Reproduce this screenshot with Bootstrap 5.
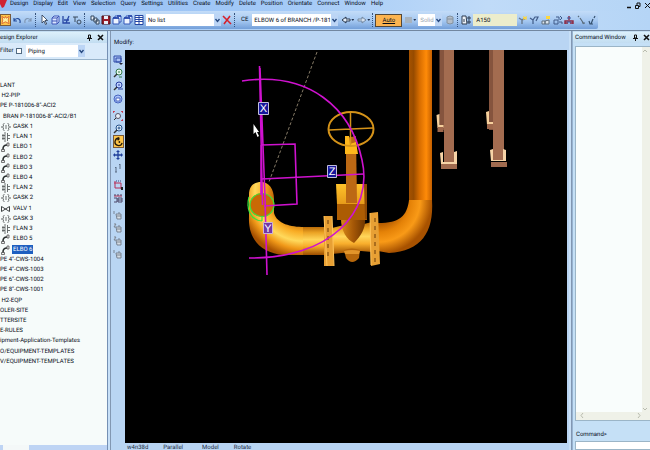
<!DOCTYPE html>
<html lang="en">
<head>
<meta charset="utf-8">
<meta name="viewport" content="width=device-width, initial-scale=1">
<title>Design</title>
<link rel="stylesheet" href="https://cdn.jsdelivr.net/npm/bootstrap@5.3.0/dist/css/bootstrap.min.css">
<style>
  body { font: 6px/10px Roboto, "Liberation Sans", sans-serif; text-rendering: geometricPrecision; color: #060c18; background: #b9d5f3; }
  button, input, select { font: inherit; color: inherit; text-rendering: inherit; }
  svg { display: block; overflow: hidden; }
  .menubar { background: linear-gradient(90deg, #94bdf3, #a4caf7 45%, #c0dbf8 75%, #b5d5f6); height: 11px; padding-left: 10px; }
  .menubar .plain { line-height: 7px; }
  .plain { border: 0; padding: 0; background: none; }
  .menu-list { gap: 5px; height: 7px; }
  .brand-mark { position: absolute; left: 0; top: 0; width: 7px; height: 8px; }
  .win-ctl { gap: 3px; }
  .win-ctl svg { width: 6px; height: 8px; }
  .toolwrap { background: linear-gradient(90deg, #a0c7f5, #c0dbf8 80%, #b5d5f6); height: 20px; border-bottom: 1px solid #72879f; }
  .toolbar-main { height: 18px; width: 92%; background: linear-gradient(#c3dcf8, #a5c8f1 55%, #739fd9); border-radius: 0 2px 2px 0; }
  .tool { width: 11px; height: 12px; flex: none; display: flex; align-items: center; justify-content: center; }
  .tool svg, .vt svg { width: 10px; height: 10px; }
  .tool.on { background: #fdc54b; border: 1px solid #795a3a; }
  .grip { width: 1px; height: 14px; flex: none; border-left: 1px dotted #35527c; margin: 0 2px; }
  .gap-l { margin-left: 2px; }
  .tri { width: 3px; height: 2px; flex: none; background: #24344f; clip-path: polygon(0 0, 100% 0, 50% 100%); }
  .pick { position: relative; flex: none; background: #fff; height: 12px; }
  .pick select { appearance: none; display: block; width: 100%; height: 12px; line-height: 11px; border: 0; padding: 0 0 0 2px; background: transparent; }
  .pick svg { position: absolute; right: 0; top: 0; width: 7px; height: 12px; background: #bcd5f5; pointer-events: none; }
  .pick-list { width: 75px; }
  .pick-ce { width: 86px; }
  .pick-fill { width: 24px; color: #9aa5b0; }
  .pick-type { width: 59px; }
  .auto { width: 27px; height: 13px; border: 1px solid #544838; background: #fcb450; line-height: 11px; text-decoration: underline; padding: 0; flex: none; }
  .spec { width: 44px; height: 12px; border: 0; background: #ecedcc; padding: 0 3px; flex: none; }
  .side { width: 108px; background: #f6fbfa; border-right: 1px solid #7590b4; flex: none; }
  .pane-title { background: linear-gradient(#dcf0fb, #c2ddf1); height: 12px; line-height: 11px; padding: 0 3px 0 0; flex: none; border-top: 1px solid #c5def2; white-space: nowrap; }
  .pane-title svg { width: 7px; height: 7px; flex: none; }
  .filter { background: #d9eafa; height: 17px; border-bottom: 1px solid #97b3cb; flex: none; }
  .filter label { width: 16px; }
  .filter input { appearance: none; width: 6px; height: 6px; border: 1px solid #526b83; background: #fff; }
  .tree { padding: 21px 0 78px; margin: 0; list-style: none; min-height: 0; }
  .tree li { height: 10px; line-height: 10px; white-space: nowrap; display: flex; align-items: center; }
  .tree svg { width: 11px; height: 10px; margin-right: 2px; flex: none; }
  .tree .sel { background: #1d5fc0; color: #fff; padding: 0 1px; margin-left: -1px; line-height: 9px; }
  .hscroll { height: 5px; background: #bed4f4; flex: none; }
  .hscroll div { width: 26px; height: 5px; margin-left: 3px; background: #f4f8f8; }
  .split { width: 3px; background: #c8e0f7; border-right: 1px solid #8297b2; flex: none; }
  .modify { height: 19px; line-height: 23px; padding-left: 3px; flex: none; }
  .vt { width: 14px; flex: none; padding-top: 3px; align-items: center; }
  .vt .tool { height: 13px; }
  .scene { background: #000; min-width: 0; min-height: 0; }
  .status { height: 7px; line-height: 10px; padding-left: 16px; gap: 15px; overflow: hidden; flex: none; color: #1c2c44; }
  .cmd { width: 78px; flex: none; background: #c5e0f6; border-left: 1px solid #97b3d0; }
  .log { margin: 3px 0 0 2px; border: 1px solid #9bb5c7; border-right: 0; background: #f9fdfc; min-height: 0; }
  .vs { width: 8px; background: #eff1e8; }
  .hs { height: 8px; background: #eff1e8; padding: 0 3px; }
  .vs svg, .hs svg { width: 6px; height: 7px; }
  .prompt { line-height: 10px; padding: 9px 0 1px 3px; flex: none; }
  .cmd input { height: 9px; border: 1px solid #9bb5c7; border-right: 0; margin-left: 2px; background: #fff; flex: none; min-width: 0; border-radius: 0; }
</style>
<script src="https://cdn.jsdelivr.net/npm/bootstrap@5.3.0/dist/js/bootstrap.bundle.min.js"></script>
</head>
<body class="vh-100 overflow-hidden d-flex flex-column">
<svg width="0" height="0" class="position-absolute" aria-hidden="true">
  <defs>
    <symbol id="chev" viewBox="0 0 7 12"><path d="M1.500 5l2 2.500 2-2.500" fill="none" stroke="#24477e" stroke-width="1.300"/></symbol>
    <symbol id="star" viewBox="0 0 10 10"><path d="M1 1l3 2 1-2 1 2 3-2-1 4 1 4-4-2-4 2 1-4z" fill="#fff1a0" stroke="#d9652e"/></symbol>
    <symbol id="undo" viewBox="0 0 10 10"><path d="M2 3v3h3M2 6c2-4 7-3 6 2" fill="none" stroke="#274f9d" stroke-width="1.200"/></symbol>
    <symbol id="redo" viewBox="0 0 10 10"><path d="M8 3v3H5M8 6C6 2 1 3 2 8" fill="none" stroke="#8098b5" stroke-width="1.200"/></symbol>
    <symbol id="arrow" viewBox="0 0 10 10"><path d="M3 0v8l2-2 1.500 3.500 1.200-.5L6 5.500h2.500z" fill="#fff" stroke="#26364e" stroke-width=".8"/></symbol>
    <symbol id="cube" viewBox="0 0 10 10"><path d="M2 3l2-2h5v6l-2 2H2zM2 3h5v6M7 3l2-2M2 6h5" fill="#dbe6ff" stroke="#3e56b8"/></symbol>
    <symbol id="axes" viewBox="0 0 10 10"><path d="M2 1v7h3M8 1L5 8h4M3 5h5" fill="none" stroke="#2947a5" stroke-width="1.300"/></symbol>
    <symbol id="tee" viewBox="0 0 10 10"><path d="M1 2h5M3 2v5" fill="none" stroke="#3b4b5d"/><circle cx="7" cy="7" r="2" fill="none" stroke="#3b4b5d"/></symbol>
    <symbol id="copy" viewBox="0 0 10 10"><path d="M1 1h3v4H1zM4 3h3v4H4zM6 5h3v4H6z" fill="#e8eff8" stroke="#33465e"/></symbol>
    <symbol id="save" viewBox="0 0 10 10"><path d="M1 1h8v8H1z" fill="#9b1c2b" stroke="#491018"/><path d="M3 1h4v3H3zM3 6h4v3H3z" fill="#e8edf8"/></symbol>
    <symbol id="win" viewBox="0 0 10 10"><path d="M1 3h6v6H1zM3 3V1h6v6H7" fill="#eef4ff" stroke="#3356b8"/><path d="M1 3h6M5 1h4" stroke="#1d3ea5" stroke-width="1.500"/></symbol>
    <symbol id="grid" viewBox="0 0 10 10"><path d="M1 .5h8v9H1z" fill="#fff" stroke="#2345a3"/><path d="M1 2.500h8M1 4.500h8M1 6.500h8M5 1v8" stroke="#2345a3"/></symbol>
    <symbol id="del" viewBox="0 0 10 10"><path d="M1 1l8 8M8 1L2 9" stroke="#d6202b" stroke-width="1.600"/></symbol>
    <symbol id="back" viewBox="0 0 10 10"><path d="M1 5l4-3v2h4v2H5v2z" fill="#e6eff9" stroke="#2a394e"/></symbol>
    <symbol id="fwd" viewBox="0 0 10 10"><path d="M9 5L5 2v2H1v2h4v2z" fill="#d6e1ee" stroke="#7388a0"/></symbol>
    <symbol id="can" viewBox="0 0 10 10"><path d="M2 2q3-2 6 0v6q-3 2-6 0zM2 4h6" fill="#b4bdc8" stroke="#84929f"/></symbol>
    <symbol id="spec" viewBox="0 0 10 10"><path d="M1 1h4l1 8H1z" fill="#eef3f8" stroke="#2f3d50"/><path d="M3 4v3M7 2h2v2H7zM7 6h2v2H7z" fill="none" stroke="#2f3d50"/></symbol>
    <symbol id="spark" viewBox="0 0 10 10"><path d="M1 3l3 2v4M4 5l4-2" fill="none" stroke="#68798e" stroke-width="1.400"/><path d="M5 1l2 1 2-1-.5 2 .5 2-2-1-2 1 .5-2z" fill="#ffd83d"/></symbol>
    <symbol id="route" viewBox="0 0 10 10"><path d="M1 3l3 2v4M4 5l2-3h3l-2 4" fill="none" stroke="#405b88" stroke-width="1.200"/></symbol>
    <symbol id="shape" viewBox="0 0 10 10"><path d="M1 6h3v3H1zM4 6l4-1v4H4z" fill="#dce5ed" stroke="#5f6e7e"/><path d="M5 1h4v3H5z" fill="#ffd83d"/></symbol>
    <symbol id="shape2" viewBox="0 0 10 10"><path d="M1 5h4v4H1zM3 2h3v3M7 1l2 2-2 2M6 7h3v2" fill="none" stroke="#405b88"/></symbol>
    <symbol id="branch" viewBox="0 0 10 10"><path d="M5 1v4M1 9V6h8v3M1 8h3M6 8h3" fill="none" stroke="#8d2740" stroke-width="1.400"/><path d="M3 3h4M3 7h4" stroke="#3a56a0"/></symbol>
    <symbol id="lineA" viewBox="0 0 10 10"><path d="M2 1l1 1M4 3l4 6M6 8h3" fill="none" stroke="#596b7a" stroke-width="1.200"/></symbol>
    <symbol id="lineB" viewBox="0 0 10 10"><path d="M8 1L7 3M6 4L4 9M2 6l1 3h3" fill="none" stroke="#35516e" stroke-width="1.200"/></symbol>
    <symbol id="pin" viewBox="0 0 7 7"><path d="M2.500 1h2v3h-2zM1 4.500h5M3.500 4v3" fill="none" stroke="#111"/></symbol>
    <symbol id="cross" viewBox="0 0 7 7"><path d="M1 1l5 5M6 1L1 6" stroke="#111" stroke-width="1.600"/></symbol>
    <symbol id="gask" viewBox="0 0 11 10"><path d="M4.500 1q-2 1-1 3l-1 1 1 1q-1 2 1 3M7.500 1q2 1 1 3l1 1-1 1q1 2-1 3M6 3v4" fill="none" stroke="#5d6262" stroke-width=".9"/><path d="M1 5h1.500M9.500 5H11" stroke="#5d6262"/></symbol>
    <symbol id="flan" viewBox="0 0 11 10"><path d="M5 0v10M7.500 1v8M2 3.500h3M2 6.500h3M7.500 3.500H10M7.500 6.500H10M3 2v6" fill="none" stroke="#5d6262" stroke-width=".9"/></symbol>
    <symbol id="elbo" viewBox="0 0 11 10"><path d="M3 9V7q0-4 4-4h1" fill="none" stroke="#2b3030" stroke-width="1.600"/><path d="M7 1h2v3H7zM1.500 7.500h3v2h-3z" fill="#eee" stroke="#444" stroke-width=".7"/></symbol>
    <symbol id="valv" viewBox="0 0 11 10"><path d="M1.500 2.500v5l8-5v5z" fill="#fff" stroke="#3c4242"/></symbol>
    <symbol id="vbox" viewBox="0 0 10 10"><path d="M1 1h7v6H1zM3 3h5v4H3z" fill="#a9c1f5" stroke="#304da8"/><path d="M6 8h4L8 10z" fill="#223"/></symbol>
    <symbol id="mag" viewBox="0 0 10 10"><circle cx="6" cy="4" r="3" fill="#e6f4ff" stroke="#24508a"/><path d="M4 6L1 9" stroke="#333" stroke-width="1.400"/><path d="M6 2.500v3M4.500 4h3" stroke="#24508a"/></symbol>
    <symbol id="magG" viewBox="0 0 10 10"><circle cx="6" cy="4" r="3" fill="#e8f8ee" stroke="#337a4c"/><path d="M4 6L1 9" stroke="#333" stroke-width="1.400"/><path d="M6 9h3M5 4h2" stroke="#337a4c"/></symbol>
    <symbol id="magR" viewBox="0 0 10 10"><circle cx="5" cy="5" r="2.500" fill="#e8f0fa" stroke="#5a5568"/><path d="M3 7L1 9" stroke="#333"/><path d="M0 2V0h2M8 0h2v2M10 8v2H8" fill="none" stroke="#cb283c" stroke-width="1.400"/></symbol>
    <symbol id="magB" viewBox="0 0 10 10"><circle cx="6" cy="4" r="3" fill="#bfd2ff" stroke="#273ea0"/><path d="M4 6L1 9" stroke="#333" stroke-width="1.400"/><path d="M5 8h5M5 4h2" stroke="#273ea0"/></symbol>
    <symbol id="box3" viewBox="0 0 10 10"><circle cx="5" cy="5" r="4" fill="#aac2f8" stroke="#4765c0"/><path d="M3 4h4v3H3z" fill="#fff" stroke="#4765c0"/></symbol>
    <symbol id="rot" viewBox="0 0 10 10"><path d="M6 1a4 4 0 1 0 3 5M6 1L4 0M6 1L4 3" fill="none" stroke="#261c0c" stroke-width="1.500"/><circle cx="6" cy="5" r="1" fill="#261c0c"/></symbol>
    <symbol id="pan" viewBox="0 0 10 10"><path d="M5 1v8M1 5h8" stroke="#203f9b" stroke-width="1.300"/><path d="M5 0l2 2H3zM5 10l2-2H3zM0 5l2-2v4zM10 5L8 3v4z" fill="#203f9b"/></symbol>
    <symbol id="walk" viewBox="0 0 10 10"><path d="M3 4v5M7 1v5M2 5l1-1M6 2l1-1M2 9h2" fill="none" stroke="#5a6d85"/></symbol>
    <symbol id="clip" viewBox="0 0 10 10"><path d="M2 1v7h8M1 3h7v6" fill="none" stroke="#b52d54"/><path d="M3 1h6" stroke="#30427d" stroke-dasharray="1 1"/><path d="M8 7h2v3H8z" fill="#222"/></symbol>
    <symbol id="clip2" viewBox="0 0 10 10"><path d="M1 3h8" stroke="#c92e4e"/><path d="M2 1v2M5 1v2M8 1v2M1 5h3v4H1M5 5h4v4H5zM5 7h4" fill="none" stroke="#4c4768"/></symbol>
    <symbol id="camera" viewBox="0 0 10 10"><path d="M3 4h5v5H4zM4 6h4M6 4V2M1 1v3" fill="#d7dee5" stroke="#788392"/></symbol>
    <symbol id="camera2" viewBox="0 0 10 10"><path d="M3 4h5v5H4zM4 6h4M6 4V2M1 1h2L1 4h2" fill="#d7dee5" stroke="#788392"/></symbol>
  </defs>
</svg>

<nav class="menubar position-relative d-flex justify-content-between flex-shrink-0" aria-label="Menu">
  <svg class="brand-mark" viewBox="0 0 7 8"><path d="M0 0h7L4 7 2 8 0 4z" fill="#d02232"/></svg>
  <div class="menu-list d-flex">
    <button class="plain">Design</button><button class="plain">Display</button><button class="plain">Edit</button><button class="plain">View</button><button class="plain">Selection</button><button class="plain">Query</button><button class="plain">Settings</button><button class="plain">Utilities</button><button class="plain">Create</button><button class="plain">Modify</button><button class="plain">Delete</button><button class="plain">Position</button><button class="plain">Orientate</button><button class="plain">Connect</button><button class="plain">Window</button><button class="plain">Help</button>
  </div>
  <div class="win-ctl d-flex">
    <button class="plain" aria-label="Minimise"><svg viewBox="0 0 6 8"><path d="M1 5.500h4" stroke="#111" stroke-width="1.500"/></svg></button>
    <button class="plain" aria-label="Restore"><svg viewBox="0 0 6 8"><path d="M.5 3.500h3v3h-3zM2 3V1h3v3.500H4" fill="none" stroke="#111"/></svg></button>
    <button class="plain" aria-label="Close"><svg viewBox="0 0 6 8"><path d="M1 1l5 5M6 1L1 6" stroke="#111"/></svg></button>
  </div>
</nav>

<div class="toolwrap flex-shrink-0">
  <div class="toolbar-main d-flex align-items-center">
    <button class="plain tool on" aria-label="Explorer"><svg><use href="#star"/></svg></button>
    <button class="plain tool" aria-label="Undo"><svg><use href="#undo"/></svg></button>
    <button class="plain tool" aria-label="Redo"><svg><use href="#redo"/></svg></button>
    <span class="grip"></span>
    <button class="plain tool" aria-label="Select"><svg><use href="#arrow"/></svg></button>
    <button class="plain tool" aria-label="Box"><svg><use href="#cube"/></svg></button>
    <button class="plain tool" aria-label="Axes"><svg><use href="#axes"/></svg></button>
    <button class="plain tool" aria-label="Tag"><svg><use href="#tee"/></svg></button>
    <span class="grip"></span>
    <button class="plain tool gap-l" aria-label="Copy"><svg><use href="#copy"/></svg></button>
    <button class="plain tool" aria-label="Save"><svg><use href="#save"/></svg></button>
    <button class="plain tool" aria-label="New view"><svg><use href="#win"/></svg></button>
    <button class="plain tool" aria-label="Clone view"><svg><use href="#win"/></svg></button>
    <button class="plain tool" aria-label="Lists"><svg><use href="#grid"/></svg></button>
    <div class="pick pick-list gap-l"><select aria-label="List"><option>No list</option></select><svg><use href="#chev"/></svg></div>
    <button class="plain tool" aria-label="Delete"><svg><use href="#del"/></svg></button>
    <span class="grip"></span>
    <label for="ce" class="px-1">CE</label>
    <div class="pick pick-ce"><select id="ce"><option>ELBOW 6 of BRANCH /P-181</option></select><svg><use href="#chev"/></svg></div>
    <button class="plain tool gap-l" aria-label="Back"><svg><use href="#back"/></svg></button><span class="tri"></span>
    <button class="plain tool gap-l" aria-label="Forward"><svg><use href="#fwd"/></svg></button><span class="tri"></span>
    <span class="grip"></span>
    <button class="auto">Auto</button>
    <button class="plain tool" aria-label="Fill"><svg viewBox="0 0 10 10"><path d="M2 2h7v6H2z" fill="#a6b3c0"/></svg></button><span class="tri"></span>
    <div class="pick pick-fill gap-l"><select aria-label="Fill style"><option>Solid</option></select><svg><use href="#chev"/></svg></div>
    <button class="plain tool gap-l" aria-label="Store"><svg><use href="#can"/></svg></button>
    <span class="grip"></span>
    <button class="plain tool" aria-label="Specification"><svg><use href="#spec"/></svg></button>
    <input class="spec gap-l" value="A150" aria-label="Specification name">
    <div class="d-flex justify-content-between flex-fill">
      <button class="plain tool" aria-label="New pipe"><svg><use href="#spark"/></svg></button>
      <button class="plain tool" aria-label="Route"><svg><use href="#route"/></svg></button>
      <button class="plain tool" aria-label="New part"><svg><use href="#shape"/></svg></button>
      <button class="plain tool" aria-label="Change part"><svg><use href="#shape2"/></svg></button>
      <button class="plain tool" aria-label="Branch"><svg><use href="#branch"/></svg></button>
      <button class="plain tool" aria-label="Slope down"><svg><use href="#lineA"/></svg></button>
      <button class="plain tool" aria-label="Slope up"><svg><use href="#lineB"/></svg></button>
    </div>
  </div>
</div>

<main class="d-flex flex-fill" style="min-height:0">
  <aside class="side d-flex flex-column overflow-hidden">
    <div class="pane-title d-flex align-items-center"><span class="me-auto">esign Explorer</span><svg class="me-1"><use href="#pin"/></svg><svg><use href="#cross"/></svg></div>
    <div class="filter d-flex align-items-center"><label for="flt">Filter</label><input id="flt" type="checkbox" class="me-1"><div class="pick pick-type"><select aria-label="Filter type"><option>Piping</option></select><svg><use href="#chev"/></svg></div></div>
    <ul class="tree d-flex flex-column justify-content-between flex-fill">
      <li>LANT</li>
      <li>&nbsp;H2-PIP</li>
      <li>PE P-181006-8"-ACI2</li>
      <li>&nbsp;&nbsp;BRAN P-181006-8"-ACI2/B1</li>
      <li><svg><use href="#gask"/></svg>GASK 1</li>
      <li><svg><use href="#flan"/></svg>FLAN 1</li>
      <li><svg><use href="#elbo"/></svg>ELBO 1</li>
      <li><svg><use href="#elbo"/></svg>ELBO 2</li>
      <li><svg><use href="#elbo"/></svg>ELBO 3</li>
      <li><svg><use href="#elbo"/></svg>ELBO 4</li>
      <li><svg><use href="#flan"/></svg>FLAN 2</li>
      <li><svg><use href="#gask"/></svg>GASK 2</li>
      <li><svg><use href="#valv"/></svg>VALV 1</li>
      <li><svg><use href="#gask"/></svg>GASK 3</li>
      <li><svg><use href="#flan"/></svg>FLAN 3</li>
      <li><svg><use href="#elbo"/></svg>ELBO 5</li>
      <li><svg><use href="#elbo"/></svg><span class="sel">ELBO 6</span></li>
      <li>PE 4"-CWS-1004</li>
      <li>PE 4"-CWS-1003</li>
      <li>PE 6"-CWS-1002</li>
      <li>PE 8"-CWS-1001</li>
      <li>&nbsp;H2-EQP</li>
      <li>OLER-SITE</li>
      <li>TTERSITE</li>
      <li>E-RULES</li>
      <li>ipment-Application-Templates</li>
      <li>O/EQUIPMENT-TEMPLATES</li>
      <li>V/EQUIPMENT-TEMPLATES</li>
    </ul>
    <div class="hscroll"><div></div></div>
  </aside>
  <div class="split"></div>

  <section class="d-flex flex-column flex-fill" style="min-width:0">
    <div class="modify">Modify:</div>
    <div class="d-flex flex-fill" style="min-height:0">
      <div class="vt d-flex flex-column">
        <button class="plain tool" aria-label="View limits"><svg><use href="#vbox"/></svg></button>
        <button class="plain tool" aria-label="Zoom in"><svg><use href="#magG"/></svg></button>
        <button class="plain tool" aria-label="Zoom out"><svg><use href="#magB"/></svg></button>
        <button class="plain tool mb-1" aria-label="Look"><svg><use href="#box3"/></svg></button>
        <button class="plain tool" aria-label="Zoom box"><svg><use href="#magR"/></svg></button>
        <button class="plain tool" aria-label="Zoom"><svg><use href="#mag"/></svg></button>
        <button class="plain tool on" aria-label="Rotate"><svg><use href="#rot"/></svg></button>
        <button class="plain tool" aria-label="Pan"><svg><use href="#pan"/></svg></button>
        <button class="plain tool mb-1" aria-label="Walk"><svg><use href="#walk"/></svg></button>
        <button class="plain tool" aria-label="Clip"><svg><use href="#clip"/></svg></button>
        <button class="plain tool mb-1" aria-label="Clip box"><svg><use href="#clip2"/></svg></button>
        <button class="plain tool" aria-label="Saved view 1"><svg><use href="#camera"/></svg></button>
        <button class="plain tool" aria-label="Saved view 2"><svg><use href="#camera2"/></svg></button>
        <button class="plain tool" aria-label="Saved view 3"><svg><use href="#camera2"/></svg></button>
        <button class="plain tool" aria-label="Saved view 4"><svg><use href="#camera"/></svg></button>
      </div>
      <div class="scene flex-fill">
        <svg class="w-100 h-100" viewBox="125 50 442 393" preserveAspectRatio="xMinYMin meet" role="img" aria-label="Pipe branch with valve">
          <defs>
            <linearGradient id="riser"><stop offset="0" stop-color="#a55200"/><stop offset=".2" stop-color="#974b00"/><stop offset=".45" stop-color="#d66c00"/><stop offset=".75" stop-color="#ff8b08"/><stop offset="1" stop-color="#c45f00"/></linearGradient>
            <linearGradient id="run" x2="0" y2="1"><stop offset="0" stop-color="#b86a08"/><stop offset=".2" stop-color="#eba324"/><stop offset=".45" stop-color="#ffd65a"/><stop offset=".68" stop-color="#f8ae2c"/><stop offset="1" stop-color="#9b4d00"/></linearGradient>
            <radialGradient id="bendL" gradientUnits="userSpaceOnUse" cx="303" cy="193" r="65"><stop offset=".45" stop-color="#c06a08"/><stop offset=".6" stop-color="#f9ac24"/><stop offset=".74" stop-color="#ffd95c"/><stop offset=".86" stop-color="#f09818"/><stop offset="1" stop-color="#a65000"/></radialGradient>
            <radialGradient id="bendR" gradientUnits="userSpaceOnUse" cx="378" cy="200" r="54"><stop offset=".43" stop-color="#b25a00"/><stop offset=".6" stop-color="#e58207"/><stop offset=".78" stop-color="#f99a17"/><stop offset="1" stop-color="#a85200"/></radialGradient>
            <linearGradient id="cone"><stop offset="0" stop-color="#d78a19"/><stop offset=".5" stop-color="#a65807"/><stop offset="1" stop-color="#6f3700"/></linearGradient>
            <linearGradient id="boxf" x2="0" y2="1"><stop offset="0" stop-color="#ffc32a"/><stop offset="1" stop-color="#e69b1a"/></linearGradient>
          </defs>
          <g>
            <path d="M439.500 50h5v80h-5zM489 50h4v80h-4z" fill="#85543e"/>
            <path d="M444 50h10v112h-10zM493 50h11v110h-11z" fill="#a36c50"/>
            <path d="M436.500 115l3-1v11h4v3h-6zM486 112l3-1v11h4v3h-6z" fill="#f7d09c"/>
            <path d="M437.500 127h6v5h-6zM487 124h6v5h-6z" fill="#9e674b"/>
            <path d="M440 153l3-1v10h11v-10l3-1v13h-16zM490 150l3-1v11h10v-11l3 1v11h-15z" fill="#f7d4a7"/>
            <path d="M441 164h16v5h-16zM491 162h16v5h-16z" fill="#a16b4f"/>
          </g>
          <path d="M409 50h23v156h-23z" fill="url(#riser)"/>
          <path d="M409 200h23c2 33-11 51-43 53l-11-2v-28c22 0 29-7 31-23z" fill="url(#bendR)"/>
          <path d="M249 195c0-10 6-13 12-13 8 0 13 7 13 17v14c3 11 17 14 30 14h20v28h-40c-24-2-36-17-35-38z" fill="url(#bendL)"/>
          <path d="M303 227h21v28h-21z" fill="url(#run)"/>
          <path d="M332 228l12-3h16l12-3v30l-11-1-29 3z" fill="url(#run)"/>
          <path d="M324 216h8l2 50h-10zM370 213l8-1 2 52-9 2z" fill="#e8a034"/>
          <path d="M324 216l3 50M332 216l2 50M370 213l1 52" stroke="#ffc35a" fill="none"/>
          <path d="M328 220v40M375 218v44" stroke="#6a3b08" stroke-dasharray="4 4"/>
          <path d="M341 219h24c1 8-4 17-11 24-7-3-13-12-13-24z" fill="url(#cone)"/>
          <path d="M344 250q8-3 16 0l-1 8q-7 8-13 0z" fill="#b6670b"/><path d="M344 251q8-2 16 0l-1 3h-14z" fill="#e2952a"/>
          <path d="M336 184h30l1 20h-30z" fill="url(#boxf)"/><path d="M337 204h30v16h-30z" fill="#ac5c03"/><path d="M364 184h3v35h-2z" fill="#8e4905"/>
          <path d="M346 138l10-2 1 67h-11z" fill="#bc6914"/><path d="M345 136h4l1 8 6-2 2 12h-13z" fill="#ffb81c"/>
          <g fill="none" stroke="#d59319"><ellipse cx="351" cy="129" rx="22.500" ry="17" stroke-width="2"/><path d="M350.500 112v33M329 130l44-2" stroke-width="1.500"/></g>
          <ellipse cx="262" cy="205" rx="12" ry="12" fill="#c96a05"/>
          <g fill="none" stroke="#3be53c" stroke-width="1.200"><ellipse cx="262" cy="205" rx="12" ry="11.500"/><path d="M249 197c-3 12 1 23 13 24M249 197c-1 3-1 6-1 9M262 221v-4"/></g>
          <path d="M317 52L269 182" stroke="#a89b82" stroke-width=".8" stroke-dasharray="3 2"/>
          <g fill="none" stroke="#cf12cf" stroke-width="1.600">
            <path d="M242 81c67-10 109 27 120 79 12 53-33 99-113 98"/>
            <path d="M259.500 66l3 139M260 68l5 130 2 77M262 145l33-1 2 60-33 2M262 179l102-5M261 145v50"/>
          </g>
          <g font-family="Liberation Sans, sans-serif" font-size="11" text-anchor="middle" fill="#fff">
            <path d="M258.500 102.500h10v12h-10zM327.500 165.500h9v12h-9z" fill="#16169b" stroke="#c1bddb"/>
            <path d="M263.500 222.500h9v11h-9z" fill="#7137a6" stroke="#cdb2d8"/>
            <text x="263.500" y="112">X</text><text x="332" y="175">Z</text><text x="268" y="232">Y</text>
          </g>
          <path d="M253.500 124v10l2-2 2 5 1.500-1-2-4h2z" fill="#fff"/>
        </svg>
      </div>
    </div>
    <div class="status d-flex"><span>w4n38d</span><span>Parallel</span><span class="ms-1">Model</span><span>Rotate</span></div>
  </section>
  <div class="split gap-l"></div>

  <aside class="cmd d-flex flex-column overflow-hidden">
    <div class="pane-title d-flex align-items-center pe-0"><span class="me-auto gap-l">Command Window</span><svg class="me-1"><use href="#pin"/></svg><svg><use href="#cross"/></svg></div>
    <div class="log d-flex flex-column flex-fill">
      <div class="d-flex justify-content-end flex-fill"><div class="vs d-flex flex-column justify-content-between"><svg viewBox="0 0 6 7"><path d="M1 5l2-2 2 2" fill="none" stroke="#b8bbae"/></svg><svg viewBox="0 0 6 7"><path d="M1 3l2 2 2-2" fill="none" stroke="#b8bbae"/></svg></div></div>
      <div class="hs d-flex justify-content-between pe-2"><svg viewBox="0 0 6 7"><path d="M4 1L2 3.500 4 6" fill="none" stroke="#b8bbae"/></svg><svg viewBox="0 0 6 7"><path d="M2 1l2 2.500L2 6" fill="none" stroke="#b8bbae"/></svg></div>
    </div>
    <label class="prompt" for="cmdline">Command&gt;</label>
    <input id="cmdline" type="text">
  </aside>
</main>
</body>
</html>
